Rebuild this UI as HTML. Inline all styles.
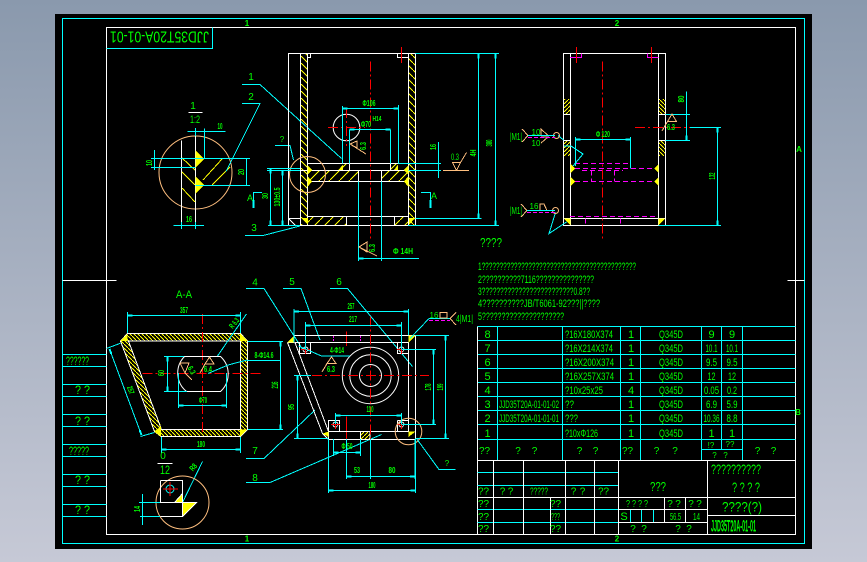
<!DOCTYPE html>
<html><head><meta charset="utf-8"><style>
html,body{margin:0;padding:0;background:#000;width:867px;height:562px;overflow:hidden}
svg{display:block}
text{font-family:"Liberation Sans",sans-serif;fill:#00ff00;font-size:12px}
.m{text-anchor:middle}
.d{font-size:8px;font-weight:bold;text-anchor:middle}
.s{font-size:10px;text-anchor:middle}
path,rect,circle,line,polygon{shape-rendering:crispEdges}
.w{stroke:#fff;fill:none}
.c{stroke:#0ff;fill:none}
.r{stroke:#f00;fill:none;stroke-dasharray:10 3 2 3}
.p{stroke:#ffbf7f;fill:none}
.n{stroke:#f0f;fill:none;stroke-dasharray:5 3}
.y{fill:#ff0;stroke:none}
</style></head><body>
<svg width="867" height="562" viewBox="0 0 867 562" xmlns="http://www.w3.org/2000/svg">
<defs>
<linearGradient id="bg" x1="0" y1="0" x2="0" y2="1"><stop offset="0" stop-color="#8a99ad"/><stop offset="1" stop-color="#c6c9d6"/></linearGradient>
<pattern id="h1" patternUnits="userSpaceOnUse" width="10" height="10"><path d="M0 10L10 0" stroke="#ff0" fill="none" shape-rendering="crispEdges"/></pattern>
<pattern id="h2" patternUnits="userSpaceOnUse" width="7" height="7"><path d="M0 0L7 7" stroke="#ff0" fill="none" shape-rendering="crispEdges"/></pattern>
<pattern id="h4" patternUnits="userSpaceOnUse" width="4" height="4"><path d="M0 4L4 0" stroke="#ff0" fill="none" shape-rendering="crispEdges"/></pattern>
<pattern id="h5" patternUnits="userSpaceOnUse" width="4" height="4"><path d="M0 0L4 4" stroke="#ff0" fill="none" shape-rendering="crispEdges"/></pattern>
<pattern id="hd" patternUnits="userSpaceOnUse" width="4" height="4"><path d="M0 0L4 4" stroke="#ff0" stroke-width="1.3" fill="none" shape-rendering="crispEdges"/></pattern>
<marker id="a" viewBox="0 0 5 2" refX="5" refY="1" markerUnits="userSpaceOnUse" markerWidth="5" markerHeight="2" orient="auto-start-reverse"><rect width="5" height="2" fill="#0ff"/></marker>
</defs>
<rect width="867" height="562" fill="url(#bg)"/>
<rect x="55" y="14" width="757" height="535" fill="#000"/>

<!-- frames -->
<path class="c" d="M62.5 18.5H804.5V543.5H62.5Z"/>
<path class="w" d="M106.5 27.5H795.5V534.5H106.5ZM62.5 280.5H116.5M787.5 280.5H804.5"/>
<path class="c" d="M106.5 48.5H212.5V27.5"/>
<text transform="rotate(180 159.5 37.5)" x="110" y="43.5" style="font-size:16px" textLength="99" lengthAdjust="spacingAndGlyphs">JJD35T20A-01-01</text>
<text class="d" x="247" y="26">1</text><text class="d" x="617" y="26">2</text>
<text class="d" x="247" y="541.5">1</text><text class="d" x="617" y="541.5">2</text>
<text class="d" x="799" y="152">A</text><text class="d" x="798" y="415">B</text>

<!-- left panel -->
<path class="c" d="M62.5 354.5H106.5M62.5 366.5H106.5M62.5 384.5H106.5M62.5 396.5H106.5M62.5 414.5H106.5M62.5 426.5H106.5M62.5 444.5H106.5M62.5 456.5H106.5M62.5 474.5H106.5M62.5 486.5H106.5M62.5 504.5H106.5M62.5 516.5H106.5"/>
<text x="66" y="365" textLength="23" lengthAdjust="spacingAndGlyphs">??????</text>
<text x="75" y="394" textLength="15" lengthAdjust="spacingAndGlyphs">? ?</text>
<text x="75" y="425" textLength="15" lengthAdjust="spacingAndGlyphs">? ?</text>
<text x="69" y="455" textLength="20" lengthAdjust="spacingAndGlyphs">?????</text>
<text x="75" y="484" textLength="15" lengthAdjust="spacingAndGlyphs">? ?</text>
<text x="75" y="514" textLength="15" lengthAdjust="spacingAndGlyphs">? ?</text>

<!-- detail I -->
<circle class="p" cx="195.5" cy="172.5" r="36.5" style="shape-rendering:auto"/>
<path class="w" d="M181.5 140.5V228.5M195.5 135.5V227.5M195.5 158.5H230.5M195.5 185.5H230.5M188.5 112.5H202.5"/>
<path d="M182 158L195 170M182 172L195 185M182 188L195 202M203 180L222 159M212 185L230 167" stroke="#ff0" fill="none"/>
<polygon class="y" points="195.5,150.5 204,159 195.5,167.5"/><polygon class="y" points="195.5,176.5 204,185 195.5,193.5"/>
<path class="c" d="M187.5 131.5H225.5M204.5 128.5V159M195.5 128V136M154.5 150V170M151 158.5H250M151 167.5H195.5M195.5 185.5H250M246.5 158.5V185.5M173.5 225.5H204M181.5 222V229M195.5 222V229"/>
<text class="m" x="193" y="109" style="font-size:10px">1</text>
<text class="m" x="195" y="123" textLength="10" lengthAdjust="spacingAndGlyphs" style="font-size:11px">1:2</text>
<text class="d" x="220" y="129" textLength="5" lengthAdjust="spacingAndGlyphs">10</text>
<text class="d" transform="rotate(-90 149 163)" x="149" y="166" textLength="6" lengthAdjust="spacingAndGlyphs">10</text>
<text class="d" transform="rotate(-90 241 172)" x="241" y="175" textLength="6" lengthAdjust="spacingAndGlyphs">20</text>
<text class="d" x="189" y="222" textLength="6" lengthAdjust="spacingAndGlyphs">16</text>

<!-- leaders -->
<path class="c" d="M242 84.5H260L341.5 158.5M242 103.5H260L226 171.5M245 235.5H263L300 226M275 145.5H290L293.5 160M246 288.5H264L303 350M246 458.5H264L315 410M246 482.5H264L270 482.5L381.5 434.5M283 288.5H301L320 340M330 288.5H347.5L412.5 366.5"/>
<text class="s" x="251" y="80">1</text><text class="s" x="251" y="100">2</text><text class="s" x="254" y="231">3</text>
<text class="s" x="282" y="142" style="font-size:8px">?</text>
<text class="s" x="255" y="285.5">4</text><text class="s" x="292" y="285">5</text><text class="s" x="339" y="285">6</text>
<text class="s" x="255" y="454">7</text><text class="s" x="255" y="481">8</text>

<!-- front view -->
<rect x="301" y="54" width="7" height="171" fill="url(#h2)"/><rect x="409" y="54" width="7" height="171" fill="url(#h2)"/>
<rect x="308" y="171" width="50" height="10" fill="url(#h1)"/><rect x="382" y="171" width="26" height="10" fill="url(#h1)"/>
<rect x="308" y="217" width="38" height="8" fill="url(#h1)"/><rect x="395" y="217" width="13" height="8" fill="url(#h1)"/>
<rect x="342" y="164" width="7" height="6" fill="url(#h1)"/><rect x="391" y="164" width="7" height="6" fill="url(#h1)"/>
<path class="w" d="M288.5 53.5H415.5V225.5H288.5ZM300.5 53.5V225.5M307.5 53.5V225.5M408.5 53.5V225.5M307.5 57.5H310.5V53.5M397.5 53.5V57.5H408.5M307.5 163.5H408.5M288.5 170.5H408.5M307.5 181.5H408.5M358.5 170.5V181.5M381.5 170.5V181.5M349.5 163.5V170.5M390.5 163.5V170.5M288.5 218.5H300.5M288.5 218.5L295.5 225.5M307.5 216.5H408.5M346.5 216.5V225.5M394.5 216.5V225.5"/>
<polygon class="y" points="307.5,165 312,170 307.5,175"/><polygon class="y" points="307.5,176 312,181.5 307.5,187"/><polygon class="y" points="408.5,165 404,170 408.5,175"/><polygon class="y" points="408.5,176 404,181.5 408.5,187"/>
<polygon class="y" points="302,218 308,218 308,225"/><polygon class="y" points="415,218 409,218 409,225"/>
<polygon class="y" points="338.5,170 343,164.5 343,170"/><polygon class="y" points="394,170 398,164.5 398,170"/>
<circle class="w" cx="346.5" cy="127.5" r="13.3" style="shape-rendering:auto"/>
<circle class="p" cx="307.5" cy="174.5" r="18" style="shape-rendering:auto"/>
<path class="r" d="M370.5 61.5V241.5M328 127.5H365M346.5 108V146"/>
<path d="M401.5 47V63" stroke="#f00"/>
<path class="c" d="M342.5 106V163.5M398.5 105V163.5M349.5 129.5V163.5M390.5 129.5V163.5M358.5 181.5V261M381.5 181.5V261M415.5 53.5H499M415.5 218.5H481.5M408 225.5H499M438.5 142V178M398.5 163.5H441M408.5 170.5H441M267 168.5H300M267 170.5H300M268 225.5H300M421 192.5H430.5V200M253.5 200V192.5H262"/>
<path d="M430.5 200V208M253.5 200V208" stroke="#0ff" stroke-width="2"/>
<line class="c" x1="342.5" y1="108.5" x2="398.5" y2="108.5" marker-start="url(#a)" marker-end="url(#a)"/>
<line class="c" x1="349.5" y1="129.5" x2="390.5" y2="129.5" marker-start="url(#a)" marker-end="url(#a)"/>
<line class="c" x1="358.5" y1="258.5" x2="419" y2="258.5" marker-start="url(#a)"/>
<line class="c" x1="478.5" y1="53.5" x2="478.5" y2="218.5" marker-start="url(#a)" marker-end="url(#a)"/>
<line class="c" x1="495.5" y1="53.5" x2="495.5" y2="225.5" marker-start="url(#a)" marker-end="url(#a)"/>
<line class="c" x1="270.5" y1="168.5" x2="270.5" y2="225.5" marker-start="url(#a)" marker-end="url(#a)"/>
<line class="c" x1="282.5" y1="170.5" x2="282.5" y2="225.5" marker-start="url(#a)" marker-end="url(#a)"/>
<path class="p" d="M443 170.5H469M452.5 162.5H460.5L456.5 170.5ZM460.5 162.5L466.5 152.5M350 144L357 141V148ZM350 144L366 154M359 247L367 242V252ZM359 247L377 256"/>
<text class="d" x="369" y="106" textLength="13" lengthAdjust="spacingAndGlyphs">Φ106</text><text class="d" x="366" y="127" textLength="10" lengthAdjust="spacingAndGlyphs">Φ70</text>
<text class="d" x="377" y="121" style="font-size:7px" textLength="9" lengthAdjust="spacingAndGlyphs">H14</text>
<text class="d" transform="rotate(-90 363 146)" x="363" y="149" textLength="8" lengthAdjust="spacingAndGlyphs">6.3</text>
<text class="d" transform="rotate(-90 372 248)" x="372" y="251" textLength="8" lengthAdjust="spacingAndGlyphs">6.3</text>
<text class="d" x="403" y="254" textLength="20" lengthAdjust="spacingAndGlyphs">Φ 14H</text>
<text class="d" transform="rotate(-90 433 147)" x="433" y="150" textLength="6" lengthAdjust="spacingAndGlyphs">16</text>
<text class="s" x="455" y="160" style="font-size:9px" textLength="8" lengthAdjust="spacingAndGlyphs">0.3</text>
<text class="d" transform="rotate(-90 473 153)" x="473" y="156" textLength="7" lengthAdjust="spacingAndGlyphs">4H</text>
<text class="d" transform="rotate(-90 489 143)" x="489" y="146" textLength="7" lengthAdjust="spacingAndGlyphs">380</text>
<text class="s" x="434" y="199" style="font-size:9px">A</text><text class="s" x="250" y="201" style="font-size:9px">A</text>
<text class="d" transform="rotate(-90 265 196)" x="265" y="199" textLength="6" lengthAdjust="spacingAndGlyphs">30</text>
<text class="d" transform="rotate(-90 277 197)" x="277" y="200" textLength="19" lengthAdjust="spacingAndGlyphs">130±0.5</text>

<!-- side view -->
<rect x="564" y="99" width="7" height="15" fill="url(#h4)"/><rect x="564" y="140" width="7" height="16" fill="url(#h4)"/><rect x="659" y="99" width="7" height="15" fill="url(#h5)"/><rect x="659" y="140" width="7" height="16" fill="url(#h5)"/>
<path class="w" d="M563.5 53.5H665.5V225.5H563.5ZM570.5 53.5V225.5M658.5 53.5V225.5M563.5 114.5H570.5M563.5 140.5H570.5M658.5 114.5H665.5M658.5 140.5H665.5M563.5 218.5H665.5"/>
<polygon class="y" points="570.5,164 575,168.5 570.5,173"/><polygon class="y" points="570.5,177 575,181.5 570.5,186"/><polygon class="y" points="658.5,164 654,168.5 658.5,173"/><polygon class="y" points="658.5,177 654,181.5 658.5,186"/>
<polygon class="y" points="563.5,218.5 570.5,218.5 570.5,225"/><polygon class="y" points="665.5,218.5 658.5,218.5 658.5,225"/>
<path class="n" d="M575 163.5H630M575 168.5H654M582 170.5H623M575 181.5H654M570 216.5H658M591.5 170.5V181.5M614.5 170.5V181.5M585.5 218.5V225.5M620.5 218.5V225.5"/>
<path d="M570 57.5H581.5V53.5M647.5 53.5V57.5H658.5" stroke="#f0f" fill="none"/>
<path class="r" d="M602.5 61.5V241.5M635 127.5H690"/>
<path d="M576.5 47V63M651.5 47V63M346.5 331.7V346M346.5 416.7V458.5" stroke="#f00"/>
<path class="c" d="M575.5 137V166M630.5 137V168.5M665.5 114.5H690M665.5 140.5H690M690 127.5H721M658.5 225.5H721M564 146H571L583 154L573 166M558 135.5L563.5 140M555.5 212.5L549 233.5L566.5 222"/>
<line class="c" x1="575.5" y1="139.5" x2="630.5" y2="139.5" marker-start="url(#a)" marker-end="url(#a)"/>
<line class="c" x1="686.5" y1="91.5" x2="686.5" y2="140.5" marker-end="url(#a)"/>
<line class="c" x1="717.5" y1="127.5" x2="717.5" y2="225.5" marker-start="url(#a)" marker-end="url(#a)"/>
<path class="p" d="M522 129L528 135.5L522 142M541 129L548 135.5H541ZM541 137H548L541 143M667.5 121.5H676.5L672 114ZM667.5 121.5L662 131M521 204L527 210.5L521 217M540 204H544L547 210.5H540Z"/>
<circle class="p" cx="556.5" cy="135.5" r="3" style="shape-rendering:auto"/><circle class="p" cx="555.5" cy="210.5" r="3" style="shape-rendering:auto"/>
<path d="M528 135.5H555M527 210.5H555" stroke="#0ff"/><path class="n" d="M528 137.5H555M527 212.5H555" style="stroke-dasharray:4 2"/>
<text x="510" y="140" style="font-size:10px" textLength="12" lengthAdjust="spacingAndGlyphs">|M1|</text>
<text x="510" y="214" style="font-size:10px" textLength="12" lengthAdjust="spacingAndGlyphs">|M1|</text>
<text class="s" x="536" y="135" style="font-size:8px">10</text><text class="s" x="536" y="146" style="font-size:8px">10</text><text class="s" x="534" y="209" style="font-size:8px">16</text>
<text class="d" x="603" y="137" textLength="14" lengthAdjust="spacingAndGlyphs">Φ 120</text>
<text class="d" transform="rotate(-90 681 99)" x="681" y="102" textLength="7" lengthAdjust="spacingAndGlyphs">80</text>
<text class="d" x="671" y="130" textLength="8" lengthAdjust="spacingAndGlyphs">6.3</text>
<text class="d" transform="rotate(-90 712 176)" x="712" y="179" textLength="7" lengthAdjust="spacingAndGlyphs">132</text>

<!-- notes -->
<text x="480" y="247" style="font-size:13px" textLength="22" lengthAdjust="spacingAndGlyphs">????</text>
<text x="478" y="270" style="font-size:11px" textLength="158" lengthAdjust="spacingAndGlyphs">1???????????????????????????????????????????</text>
<text x="478" y="283" style="font-size:11px" textLength="116" lengthAdjust="spacingAndGlyphs">2??????????7116???????????????</text>
<text x="478" y="295" style="font-size:11px" textLength="112" lengthAdjust="spacingAndGlyphs">3?????????????????????????0.8??</text>
<text x="478" y="307" style="font-size:11px" textLength="122" lengthAdjust="spacingAndGlyphs">4??????????JB/T6061-92???||????</text>
<text x="478" y="320" style="font-size:11px" textLength="86" lengthAdjust="spacingAndGlyphs">5?????????????????????</text>

<!-- section A-A -->
<path fill="url(#hd)" fill-rule="evenodd" d="M127.7 333.3H240L247.7 341V429.3L240 436.7H161L154.3 431.7L120.3 341ZM128.5 341L161 426V429.3H240V341Z"/>
<path class="w" d="M127.5 333.5H240.5L247.5 341V429.5L240.5 436.5H161L154.5 431.5L120.5 341ZM127.5 341H240.5V429.5H161.5L128.5 341"/>
<polygon class="y" points="120.3,341 127.7,333.3 127.7,341"/><polygon class="y" points="240,333.3 247.7,341 240,341"/><polygon class="y" points="240,429.3 247.7,429.3 240,436.7"/><polygon class="y" points="154.3,431.7 161,426 161,436.7"/>
<path class="r" d="M202.5 314V433M142.5 373.5H261.5"/>
<path class="w" d="M184.5 356.5H220.5A23.7 23.7 0 0 1 220.5 391.5H186.5A23.7 23.7 0 0 1 184.5 356.5Z" style="shape-rendering:auto"/>
<path class="c" d="M127.5 312V333M240.5 312V333M161.5 437V453M240.5 437V453M164 356.5H184M164 391.5H187M178.5 373V408M226.5 373V408M246.5 314L217.5 356M208 373.5L228 365L247 360M247 360.5H280M248 341.5H283M248 429.5H283M106.5 348.5L120.3 343.3M140.5 436.5L154.3 432.5M202.5 461.5L182.5 502.5M142.5 494V525"/>
<line class="c" x1="127.5" y1="315.5" x2="240.5" y2="315.5" marker-start="url(#a)" marker-end="url(#a)"/>
<line class="c" x1="161.5" y1="449.5" x2="240.5" y2="449.5" marker-start="url(#a)" marker-end="url(#a)"/>
<line class="c" x1="109.5" y1="349" x2="141.5" y2="435" marker-start="url(#a)" marker-end="url(#a)"/>
<line class="c" x1="167.5" y1="356.5" x2="167.5" y2="391.5" marker-start="url(#a)" marker-end="url(#a)"/>
<line class="c" x1="178.5" y1="405.5" x2="226.5" y2="405.5" marker-start="url(#a)" marker-end="url(#a)"/>
<line class="c" x1="280.5" y1="341.5" x2="280.5" y2="429.5" marker-start="url(#a)" marker-end="url(#a)"/>
<path class="p" d="M180 363H189L185 373ZM205 364H214L209.5 357ZM205 364L200 373M185 373L192 380"/>
<text class="s" x="184" y="298" style="font-size:11px" textLength="16" lengthAdjust="spacingAndGlyphs">A-A</text>
<text class="d" x="184" y="313" textLength="8" lengthAdjust="spacingAndGlyphs">357</text><text class="d" x="201" y="447" textLength="8" lengthAdjust="spacingAndGlyphs">180</text>
<text class="d" transform="rotate(70 131 390)" x="131" y="393" textLength="8" lengthAdjust="spacingAndGlyphs">257</text>
<text class="d" transform="rotate(-90 161 373)" x="161" y="376" textLength="6" lengthAdjust="spacingAndGlyphs">60</text>
<text class="d" x="203" y="403" textLength="8" lengthAdjust="spacingAndGlyphs">Φ70</text><text class="d" x="208" y="372" textLength="8" lengthAdjust="spacingAndGlyphs">6.4</text>
<text class="d" transform="rotate(60 192 370)" x="192" y="373" textLength="8" lengthAdjust="spacingAndGlyphs">6.3</text>
<text class="d" transform="rotate(-50 234 323)" x="234" y="326" textLength="11" lengthAdjust="spacingAndGlyphs">R 6.3</text>
<text class="d" x="264" y="358" textLength="19" lengthAdjust="spacingAndGlyphs">8-Φ14.6</text>
<text class="d" transform="rotate(-90 275 385)" x="275" y="388" textLength="7" lengthAdjust="spacingAndGlyphs" style="font-size:9px">216</text>

<!-- detail II -->
<text class="s" x="163" y="459">0</text>
<path class="w" d="M157.5 463.5H172.5"/>
<text class="m" x="165" y="474" textLength="10" lengthAdjust="spacingAndGlyphs">12</text>
<circle class="p" cx="182.5" cy="502.5" r="26.5" style="shape-rendering:auto"/>
<polygon class="y" points="182.5,502.5 196.5,502.5 182.5,516.5"/><polygon class="y" points="174.5,502.5 182.5,493.5 182.5,502.5"/>
<path class="w" d="M160.5 480.5H182.5V502.5M160.5 480.5V502.5H196.5L182.5 516.5H160.5M182.5 516.5V502.5M174.5 502.5L182.5 493.5"/>
<path class="c" d="M139 502.5H160M140 516.5H160"/>
<circle class="c" cx="170" cy="489" r="4" style="shape-rendering:auto"/>
<path d="M163 489H178M170 482V496" stroke="#f00"/>
<text class="d" x="193" y="470" transform="rotate(-50 193 467)" textLength="7" lengthAdjust="spacingAndGlyphs">R8</text>
<text class="d" transform="rotate(-90 137 509)" x="137" y="512" textLength="6" lengthAdjust="spacingAndGlyphs">14</text>

<!-- plan view -->
<path class="w" d="M294 335.5H415.5V439.5H328.5V431.5H408.5V342.5H295M287.5 342.5H294V335.5M287.5 342.5L322.5 433.5L328.5 439.5M295 342.5L328.5 431.5M299.5 342.5V353.5H310.5V342.5M397.5 342.5V353.5H408.5M328.5 431.5V420.5H339.5V431.5M397.5 420.5H408.5M397.5 420.5V431.5"/>
<polygon class="y" points="287.5,342.5 294,335.5 294,342.5"/><polygon class="y" points="408.5,342.5 415.5,335.5 408.5,335.5"/><polygon class="y" points="408.5,431.5 415.5,431.5 408.5,437"/><polygon class="y" points="322.5,433.5 328.5,431.5 328.5,437"/>
<rect x="361" y="432" width="9" height="7" fill="url(#h4)"/>
<path class="w" d="M360.5 431.5V439.5M370 431.5V439.5"/>
<circle class="w" cx="370.5" cy="375.5" r="28.2" style="shape-rendering:auto"/><circle class="w" cx="370.5" cy="375.5" r="20.7" style="shape-rendering:auto"/><circle class="w" cx="370.5" cy="375.5" r="11" style="shape-rendering:auto"/>
<path class="r" d="M370.5 316.5V440M294 375.5H429"/>
<path d="M333.5 336V342M360.5 336V342" stroke="#f0f" stroke-dasharray="2 1"/>
<g style="shape-rendering:auto"><circle class="w" cx="305.5" cy="349.5" r="2.4"/><circle class="w" cx="401.5" cy="349.5" r="2.4"/><circle class="w" cx="335.5" cy="424.5" r="2.4"/><circle class="w" cx="401.5" cy="424.5" r="2.4"/></g>
<path d="M301 349.5H310M305.5 345V354M397 349.5H406M401.5 345V354M331 424.5H340M335.5 420V429M397 424.5H406M401.5 420V429" stroke="#f00"/>
<circle class="p" cx="408.5" cy="431.5" r="13.3" style="shape-rendering:auto"/>
<path class="c" d="M294 309V342M408.5 309V335M305.5 322V349M401.5 322V349M415.5 335.5H449M401.5 349.5H436M401.5 424.5H436M415.5 438.5H449M294 375.5H311M294 438.5H328M335.5 413V424M401.5 413V424M333.5 439V456M360.5 439V456M346.5 439V479M370.5 439V479M415 439V479M328.5 439V493M415.5 439V493M298.5 346L321.5 356H350M429 318.5H450M429 318.5L410 338.5M416.5 438.5L439 469.5H455.5"/>
<line class="c" x1="294" y1="311.5" x2="408.5" y2="311.5" marker-start="url(#a)" marker-end="url(#a)"/>
<line class="c" x1="305.5" y1="325.5" x2="401.5" y2="325.5" marker-start="url(#a)" marker-end="url(#a)"/>
<line class="c" x1="433.5" y1="349.5" x2="433.5" y2="424.5" marker-start="url(#a)" marker-end="url(#a)"/>
<line class="c" x1="445.5" y1="335.5" x2="445.5" y2="438.5" marker-start="url(#a)" marker-end="url(#a)"/>
<line class="c" x1="297.5" y1="375.5" x2="297.5" y2="438.5" marker-start="url(#a)" marker-end="url(#a)"/>
<line class="c" x1="335.5" y1="415.5" x2="401.5" y2="415.5" marker-start="url(#a)" marker-end="url(#a)"/>
<line class="c" x1="333.5" y1="452.5" x2="360.5" y2="452.5" marker-start="url(#a)" marker-end="url(#a)"/>
<line class="c" x1="346.5" y1="476.5" x2="415" y2="476.5" marker-start="url(#a)" marker-end="url(#a)"/>
<line class="c" x1="328.5" y1="490.5" x2="415.5" y2="490.5" marker-start="url(#a)" marker-end="url(#a)"/>
<path class="p" d="M327 363.5H336L331.5 357ZM327 363.5L322 372M440 312.5H447V318L440 318ZM450 318.5L456 312.5M450 318.5L456 325"/>
<path class="n" d="M429 320.5H450" style="stroke-dasharray:4 2"/>
<text class="d" x="351" y="309" textLength="7" lengthAdjust="spacingAndGlyphs">257</text><text class="d" x="353" y="322" textLength="8" lengthAdjust="spacingAndGlyphs">217</text>
<text class="d" x="337" y="353" textLength="14" lengthAdjust="spacingAndGlyphs">4-Φ14</text><text class="d" x="331" y="372" textLength="8" lengthAdjust="spacingAndGlyphs">6.3</text>
<text class="s" x="434" y="318" style="font-size:8px">16</text>
<text x="456" y="322" style="font-size:10px" textLength="17" lengthAdjust="spacingAndGlyphs">4|M1|</text>
<text class="d" transform="rotate(-90 428 387)" x="428" y="390" textLength="7" lengthAdjust="spacingAndGlyphs">178</text>
<text class="d" transform="rotate(-90 440 387)" x="440" y="390" textLength="7" lengthAdjust="spacingAndGlyphs">199</text>
<text class="d" transform="rotate(-90 291 407)" x="291" y="410" textLength="6" lengthAdjust="spacingAndGlyphs">95</text>
<text class="d" x="370" y="412" textLength="7" lengthAdjust="spacingAndGlyphs">110</text><text class="d" x="347" y="449" textLength="11" lengthAdjust="spacingAndGlyphs">Φ 50</text>
<text class="d" x="357" y="473" textLength="6" lengthAdjust="spacingAndGlyphs">53</text><text class="d" x="392" y="473" textLength="7" lengthAdjust="spacingAndGlyphs">80</text><text class="d" x="372" y="488" textLength="7" lengthAdjust="spacingAndGlyphs">180</text>
<text class="s" x="447" y="466" style="font-size:8px">?</text>

<!-- parts table -->
<path class="c" d="M477.5 326.5H795.5M477.5 340.5H795.5M477.5 354.5H795.5M477.5 368.5H795.5M477.5 382.5H795.5M477.5 396.5H795.5M477.5 410.5H795.5M477.5 424.5H795.5M477.5 439.5H795.5M497.5 326.5V460M562.5 326.5V460M620.5 326.5V460M640.5 326.5V460M701.5 326.5V460M721.5 326.5V449M742.5 326.5V460M701.5 449.5H742.5"/>
<path class="w" d="M477.5 326.5V534.5M477.5 460.5H795.5"/>
<text class="m" x="487.5" y="338" style="font-size:11px">8</text><text class="m" x="487.5" y="352" style="font-size:11px">7</text><text class="m" x="487.5" y="366" style="font-size:11px">6</text><text class="m" x="487.5" y="380" style="font-size:11px">5</text><text class="m" x="487.5" y="394" style="font-size:11px">4</text><text class="m" x="487.5" y="408" style="font-size:11px">3</text><text class="m" x="487.5" y="422" style="font-size:11px">2</text><text class="m" x="487.5" y="437" style="font-size:11px">1</text>
<text class="m" x="631" y="338" style="font-size:11px">1</text><text class="m" x="631" y="352" style="font-size:11px">1</text><text class="m" x="631" y="366" style="font-size:11px">1</text><text class="m" x="631" y="380" style="font-size:11px">1</text><text class="m" x="631" y="394" style="font-size:11px">4</text><text class="m" x="631" y="408" style="font-size:11px">1</text><text class="m" x="631" y="422" style="font-size:11px">1</text><text class="m" x="631" y="437" style="font-size:11px">1</text>
<text x="499" y="408" textLength="60" lengthAdjust="spacingAndGlyphs" style="font-size:11px">JJD35T20A-01-01-02</text>
<text x="499" y="422" textLength="60" lengthAdjust="spacingAndGlyphs" style="font-size:11px">JJD35T20A-01-01-01</text>
<text x="565" y="338" textLength="48" lengthAdjust="spacingAndGlyphs" style="font-size:11px">?16X180X374</text>
<text x="565" y="352" textLength="48" lengthAdjust="spacingAndGlyphs" style="font-size:11px">?16X214X374</text>
<text x="565" y="366" textLength="49" lengthAdjust="spacingAndGlyphs" style="font-size:11px">?16X200X374</text>
<text x="565" y="380" textLength="49" lengthAdjust="spacingAndGlyphs" style="font-size:11px">?16X257X374</text>
<text x="565" y="394" textLength="38" lengthAdjust="spacingAndGlyphs" style="font-size:11px">?10x25x25</text>
<text x="565" y="408" textLength="9" lengthAdjust="spacingAndGlyphs" style="font-size:11px">??</text>
<text x="565" y="422" textLength="13" lengthAdjust="spacingAndGlyphs" style="font-size:11px">???</text>
<text x="565" y="437" textLength="33" lengthAdjust="spacingAndGlyphs" style="font-size:11px">?10xΦ126</text>
<text x="659" y="338" textLength="24" lengthAdjust="spacingAndGlyphs" style="font-size:11px">Q345D</text>
<text x="659" y="352" textLength="24" lengthAdjust="spacingAndGlyphs" style="font-size:11px">Q345D</text>
<text x="659" y="366" textLength="24" lengthAdjust="spacingAndGlyphs" style="font-size:11px">Q345D</text>
<text x="659" y="380" textLength="24" lengthAdjust="spacingAndGlyphs" style="font-size:11px">Q345D</text>
<text x="659" y="394" textLength="24" lengthAdjust="spacingAndGlyphs" style="font-size:11px">Q345D</text>
<text x="659" y="408" textLength="24" lengthAdjust="spacingAndGlyphs" style="font-size:11px">Q345D</text>
<text x="659" y="422" textLength="24" lengthAdjust="spacingAndGlyphs" style="font-size:11px">Q345D</text>
<text x="659" y="437" textLength="24" lengthAdjust="spacingAndGlyphs" style="font-size:11px">Q345D</text>
<text class="m" x="711.5" y="338" style="font-size:11px">9</text><text class="m" x="732" y="338" style="font-size:11px">9</text>
<text class="m" x="711.5" y="352" style="font-size:11px" textLength="12" lengthAdjust="spacingAndGlyphs">10.1</text><text class="m" x="732" y="352" style="font-size:11px" textLength="12" lengthAdjust="spacingAndGlyphs">10.1</text>
<text class="m" x="711.5" y="366" style="font-size:11px" textLength="11" lengthAdjust="spacingAndGlyphs">9.5</text><text class="m" x="732" y="366" style="font-size:11px" textLength="11" lengthAdjust="spacingAndGlyphs">9.5</text>
<text class="m" x="711.5" y="380" style="font-size:11px" textLength="8" lengthAdjust="spacingAndGlyphs">12</text><text class="m" x="732" y="380" style="font-size:11px" textLength="8" lengthAdjust="spacingAndGlyphs">12</text>
<text class="m" x="711.5" y="394" style="font-size:11px" textLength="15" lengthAdjust="spacingAndGlyphs">0.05</text><text class="m" x="732" y="394" style="font-size:11px" textLength="10" lengthAdjust="spacingAndGlyphs">0.2</text>
<text class="m" x="711.5" y="408" style="font-size:11px" textLength="11" lengthAdjust="spacingAndGlyphs">6.9</text><text class="m" x="732" y="408" style="font-size:11px" textLength="11" lengthAdjust="spacingAndGlyphs">5.9</text>
<text class="m" x="711.5" y="422" style="font-size:11px" textLength="16" lengthAdjust="spacingAndGlyphs">10.36</text><text class="m" x="732" y="422" style="font-size:11px" textLength="11" lengthAdjust="spacingAndGlyphs">8.8</text>
<text class="m" x="711.5" y="437" style="font-size:11px">1</text><text class="m" x="732" y="437" style="font-size:11px">1</text>
<text class="s" x="484.5" y="454">??</text><text class="s" x="518" y="454">?</text><text class="s" x="534.5" y="454">?</text><text class="s" x="579.5" y="454">?</text><text class="s" x="595.5" y="454">?</text><text class="s" x="627.5" y="454">??</text><text class="s" x="656.5" y="454">?</text><text class="s" x="675" y="454">?</text><text class="s" x="711" y="448" style="font-size:8px">!?</text><text class="s" x="730" y="447" style="font-size:8px">??</text><text class="s" x="714.5" y="458" style="font-size:8px">?</text><text class="s" x="725.5" y="458" style="font-size:8px">?</text><text class="s" x="757.5" y="454">?</text><text class="s" x="773.5" y="454">?</text>

<!-- title block -->
<path class="c" d="M477.5 472.5H618.5M477.5 485.5H618.5M477.5 509.5H618.5M477.5 522.5H618.5M630.5 509.5V522.5M641.5 509.5V522.5M653.5 509.5V522.5"/>
<path class="w" d="M493.5 460.5V534.5M523.5 460.5V534.5M565.5 460.5V534.5M594.5 460.5V534.5M618.5 460.5V534.5M707.5 460.5V534.5M477.5 497.5H795.5M618.5 509.5H707.5M618.5 522.5H707.5M664.5 497.5V522.5M685.5 497.5V522.5M550.5 497.5V534.5M707.5 515.5H795.5"/>
<text class="s" x="483.5" y="494.5">??</text><text class="s" x="502.5" y="494.5">?</text><text class="s" x="510.5" y="494.5">?</text>
<text x="530" y="494.5" style="font-size:10px" textLength="18" lengthAdjust="spacingAndGlyphs">?????</text>
<text class="s" x="573.5" y="494.5">?</text><text class="s" x="582.5" y="494.5">?</text><text class="s" x="603.5" y="494.5">??</text>
<text class="s" x="483.5" y="507">??</text><text class="s" x="555.5" y="507">??</text>
<text class="s" x="483.5" y="520">??</text><text class="s" x="555.5" y="520" textLength="9" lengthAdjust="spacingAndGlyphs">???</text>
<text class="s" x="483.5" y="532">??</text><text class="s" x="555.5" y="532">??</text>
<text x="626" y="507" style="font-size:10px" textLength="22" lengthAdjust="spacingAndGlyphs">? ? ? ?</text>
<text class="s" x="670" y="507">?</text><text class="s" x="678" y="507">?</text><text class="s" x="691" y="507">?</text><text class="s" x="699" y="507">?</text>
<text class="s" x="624" y="520" style="font-size:11px">S</text>
<text class="s" x="675.5" y="520" textLength="11" lengthAdjust="spacingAndGlyphs">56.5</text>
<text class="s" x="696.5" y="520" textLength="7" lengthAdjust="spacingAndGlyphs">14</text>
<text class="s" x="633" y="532">?</text><text class="s" x="644" y="532">?</text><text class="s" x="678" y="532">?</text><text class="s" x="689" y="532">?</text>
<text x="650" y="491" style="font-size:13px" textLength="16" lengthAdjust="spacingAndGlyphs">???</text>
<text x="711" y="474" style="font-size:14px" textLength="50" lengthAdjust="spacingAndGlyphs">??????????</text>
<text x="732" y="492" style="font-size:14px" textLength="28" lengthAdjust="spacingAndGlyphs">? ? ? ?</text>
<text x="722" y="511.5" style="font-size:14px" textLength="40" lengthAdjust="spacingAndGlyphs">????(?)</text>
<text x="711" y="531.5" style="font-size:17px;font-weight:bold" textLength="45" lengthAdjust="spacingAndGlyphs">JJD35T20A-01-01</text>
</svg>
</body></html>
